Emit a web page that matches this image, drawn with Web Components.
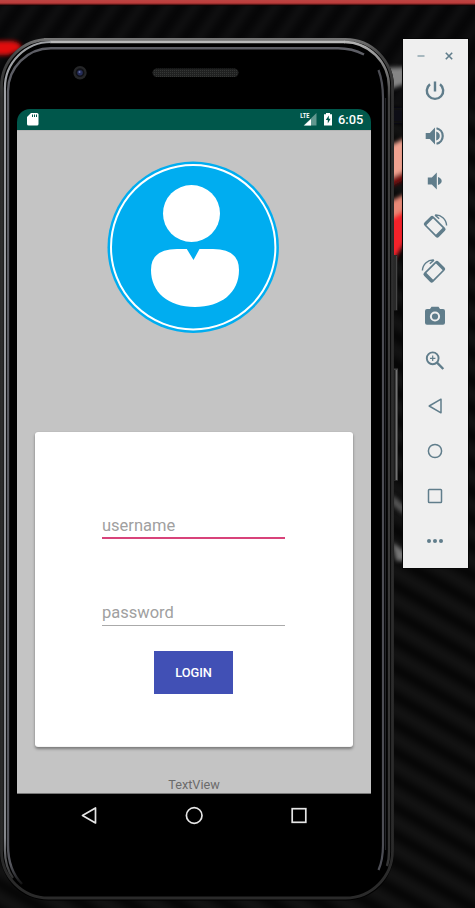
<!DOCTYPE html>
<html lang="en"><head><meta charset="utf-8"><title>Android Emulator</title>
<style>
html,body{margin:0;padding:0;background:#080808;overflow:hidden}
body{font-family:Roboto,"Liberation Sans",sans-serif}
</style></head><body>
<desktop-scene>
  <android-phone>
    <status-bar slot="status">6:05</status-bar>
    <login-screen slot="app">
      <user-avatar></user-avatar>
      <login-card>
        <text-field active>username</text-field>
        <text-field>password</text-field>
        <flat-button>LOGIN</flat-button>
      </login-card>
      <span slot="footer">TextView</span>
    </login-screen>
    <nav-bar slot="nav"></nav-bar>
  </android-phone>
  <emulator-toolbar></emulator-toolbar>
</desktop-scene>
<script>
function define(name, html){
  const t=document.createElement('template'); t.innerHTML=html;
  customElements.define(name, class extends HTMLElement{
    constructor(){super(); this.attachShadow({mode:'open'}).append(t.content.cloneNode(true));}
  });
}

define('desktop-scene', `<style>
:host{display:flex;gap:9px;align-items:flex-start;width:475px;height:908px;box-sizing:border-box;padding-top:38px;position:relative;isolation:isolate;overflow:hidden}
.wall{position:absolute;inset:0;z-index:-1}
</style>
<svg class="wall" width="475" height="908" viewBox="0 0 475 908">
<defs>
<pattern id="weave" width="24" height="24" patternUnits="userSpaceOnUse" patternTransform="rotate(30)"><rect width="24" height="24" fill="#060606"/><rect y="3" width="24" height="13" fill="#121212"/></pattern>
<pattern id="weave2" width="22" height="30" patternUnits="userSpaceOnUse" patternTransform="rotate(35)"><rect width="22" height="30" fill="#060607"/><rect x="4" width="10" height="30" fill="#0f0f10"/></pattern>
<linearGradient id="red" x2="0" y2="1"><stop offset="0" stop-color="#bd4543"/><stop offset=".55" stop-color="#bd3c3b"/><stop offset="1" stop-color="#170000"/></linearGradient>
<filter id="b" x="-50%" y="-50%" width="200%" height="200%"><feGaussianBlur stdDeviation="2"/></filter>
<filter id="b2" color-interpolation-filters="sRGB"><feGaussianBlur stdDeviation="3"/></filter></defs>
<g filter="url(#b2)"><rect x="-15" y="-15" width="505" height="938" fill="url(#weave)"/><rect x="-15" y="-15" width="505" height="120" fill="url(#weave2)"/></g>
<rect width="475" height="5.5" fill="url(#red)"/>
<g filter="url(#b)"><path d="M-5 41H12Q24 43 20 50L8 55H-5z" fill="#e00c0c"/>
<path d="M385 68 L405 67 V84 L385 91z" fill="#858585"/>
<path d="M385 108h20v15h-20z" fill="#0c0f18"/>
<path d="M385 148 L405 138 V172 L385 182z" fill="#f0a290"/>
<path d="M385 181 L405 171 V180 L385 189z" fill="#7c0c0c"/>
<path d="M385 206 L405 196 V242 L385 275z" fill="#f4202b"/>
<path d="M385 204 L405 194 V210 L385 222z" fill="#e88876"/>
<path d="M392 494 L405 506 V516 L392 505z" fill="#555"/>
<path d="M392 542 L405 552 V561 H396z" fill="#777"/></g>
</svg><slot></slot>`);

define('android-phone', `<style>
:host{display:block;flex:none;width:394px;height:862px;box-sizing:border-box;padding:71px 23px 0 17px;position:relative}
.body{position:absolute;left:0;top:0;z-index:0}
.screen{position:relative;display:flex;flex-direction:column}
</style>
<svg class="body" width="403" height="864" viewBox="0 38 403 864">
<defs>
<linearGradient id="o" gradientUnits="userSpaceOnUse" x1="0" y1="38" x2="0" y2="899"><stop offset="0" stop-color="#777"/><stop offset=".02" stop-color="#444"/><stop offset=".07" stop-color="#303030"/><stop offset="1" stop-color="#2a2a2a"/></linearGradient>
<linearGradient id="hl" gradientUnits="userSpaceOnUse" x1="0" y1="38" x2="0" y2="899"><stop offset="0" stop-color="#bbb"/><stop offset=".03" stop-color="#858585"/><stop offset=".07" stop-color="#404040"/><stop offset="1" stop-color="#343434"/></linearGradient>
<linearGradient id="il" gradientUnits="userSpaceOnUse" x1="0" y1="38" x2="0" y2="899"><stop offset="0" stop-color="#5d5e65"/><stop offset=".96" stop-color="#55565d"/><stop offset=".983" stop-color="#111"/></linearGradient>
<linearGradient id="ll" gradientUnits="userSpaceOnUse" x1="0" y1="38" x2="0" y2="880"><stop offset="0" stop-color="#a0a2a6"/><stop offset=".95" stop-color="#85878c"/><stop offset="1" stop-color="#2a2a2a"/></linearGradient>
<pattern id="dots" width="2" height="2" patternUnits="userSpaceOnUse"><rect width="2" height="2" fill="#202121"/><rect width="1" height="1" fill="#343635"/></pattern>
</defs>
<path d="M393 255h4.500v55.500h-4.500z" fill="#292929"/><path d="M396.500 256v54" stroke="#464646"/>
<path d="M393 368.500h5v112h-5z" fill="#424242"/><path d="M394.500 370v110" stroke="#1d1d1d"/><path d="M396.500 370v110" stroke="#717171"/>
<rect x="0" y="38.500" width="394" height="862" rx="48" fill="#000"/>
<rect x="1.500" y="39.500" width="391" height="858.500" rx="47" fill="none" stroke="url(#o)" stroke-width="2.800"/>
<path d="M44 38.500H206" stroke="#777"/>
<path d="M344 42A45 45 0 0 1 389 87V852Q389 860 387 866" fill="none" stroke="url(#hl)" stroke-width="2.400"/>
<path d="M50 42H345" stroke="#b9b9b9" stroke-width="2.300"/>
<path d="M13 878Q5 867 4.900 850V88A46 46 0 0 1 50.900 42" fill="none" stroke="url(#ll)" stroke-width="2.200"/>
<path d="M22 884Q8 870 8 845V91.300A43 43 0 0 1 51 48.300H338Q352 48.300 364 54.500" fill="none" stroke="url(#il)" stroke-width="2.400"/>
<path d="M378.500 70Q383 82 383 98V845Q383 860 378.500 870" fill="none" stroke="#4c4d54" stroke-width="2.200"/>
<path d="M385.500 98V850" stroke="#222326" stroke-width="1.200"/>
<circle cx="80" cy="72.700" r="6.700" fill="#252628"/><circle cx="80" cy="72.700" r="4.400" fill="#101116"/><circle cx="80" cy="72.700" r="2.800" fill="#252c58"/><circle cx="79.500" cy="72" r="1" fill="#6670a0"/>
<rect x="152.500" y="68.500" width="86" height="8.500" rx="4.200" fill="url(#dots)"/>
</svg>
<div class="screen"><slot name="status"></slot><slot name="app"></slot><slot name="nav"></slot></div>`);

define('status-bar', `<style>
:host{display:flex;align-items:center;height:21px;box-sizing:border-box;padding:0 7px 0 10px;background:#00574b;border-radius:13px 13px 0 0;color:#fff;font-size:12.800px;font-weight:500;line-height:22px}
.sp{flex:1}.time{width:26px;white-space:nowrap;padding-top:1px}
svg{display:block;flex:none}
</style>
<svg width="12" height="21" viewBox="27 109 12 21"><path d="M31 113h6q1.500 0 1.500 1.500v9.500q0 1.500-1.500 1.500h-8.500q-1.500 0-1.500-1.500v-7z" fill="#fff"/><path d="M32.500 114.500v2.500M34.500 114.500v2.500M36.500 114.500v2.500" stroke="#00574b"/></svg>
<span class="sp"></span>
<svg width="38" height="21" viewBox="300 109 38 21"><path d="M316.500 113v12.500h-13z" fill="#fff" fill-opacity=".38"/><path d="M311 119v6.500h-7z" fill="#fff"/><rect x="299.500" y="112" width="9.800" height="7.600" fill="#00574b"/>
<text x="300.300" y="118.300" font-size="7.500" font-weight="700" fill="#fff" textLength="9" lengthAdjust="spacingAndGlyphs">LTE</text>
<path d="M326 113h4v1.300h2V125.500h-8V114.300h2z" fill="#fff"/><path d="M328.800 115.500l-3 4.600h2v3.300l2.800-4.600h-1.800z" fill="#00574b"/></svg>
<span class="time"><slot></slot></span>`);

define('login-screen', `<style>
:host{display:flex;flex-direction:column;align-items:center;height:664px;box-sizing:border-box;padding-top:30px;background:#c4c4c4;border-top:1px solid #b5b5b5;border-bottom:1px solid #777}
.foot{font-size:12.700px;line-height:16px;color:#6b6b6b;margin-top:30px}
</style><slot></slot><div class="foot"><slot name="footer"></slot></div>`);

define('user-avatar', `<style>:host{display:block;height:172px;width:172px;margin-right:2px}svg{display:block}</style>
<svg width="172" height="172" viewBox="107 161 172 172"><circle cx="193.200" cy="247.200" r="85.700" fill="#00adf0"/><circle cx="193.200" cy="247.200" r="82.200" fill="none" stroke="#fff" stroke-width="2"/>
<circle cx="191.500" cy="213.500" r="28.500" fill="#fff"/>
<path d="M186.800 249L193.500 260 199.500 249H213Q239 249 239 270C239 293 221 307 195 307C168 307 151 292 151 270Q151 249 177 249z" fill="#fff"/></svg>`);

define('login-card', `<style>
:host{display:flex;flex-direction:column;align-items:center;width:318px;height:316px;box-sizing:border-box;padding:81px 0 0;margin-top:99px;margin-bottom:1px;background:#fff;border-radius:3px;box-shadow:0 1px 0 #f4f4f4,0 2.500px 3px rgba(0,0,0,.38),0 0 1px rgba(0,0,0,.15)}
</style><slot></slot>`);

define('text-field', `<style>
:host{display:block;width:183px;height:26px;box-sizing:border-box;font-size:16.500px;line-height:25px;color:#a0a0a0;margin:0 1px 61px 0;background:linear-gradient(#aaa,#aaa) 0 25px/100% 1px no-repeat}
:host([active]){background:linear-gradient(#d8437a,#d8437a) 0 24px/100% 2px no-repeat}
</style><slot></slot>`);

define('flat-button', `<style>
:host{display:flex;align-items:center;justify-content:center;width:79px;height:43px;background:#4150b5;color:#fff;font-size:12.800px;font-weight:500;line-height:16px;margin:-36px 1px 0 0;box-sizing:border-box;padding-top:1px}
</style><slot></slot>`);

define('nav-bar', `<style>:host{display:flex;height:43px;padding:0 19.500px;background:#000}svg{flex:1;display:block;height:43px}</style>
<svg viewBox="-12 -21.500 24 43"><path d="M6 -7.500V7.500L-7 0z" fill="none" stroke="#e5e5e5" stroke-width="1.700" stroke-linejoin="round"/></svg>
<svg viewBox="-12 -21.500 24 43"><circle cx="-.3" r="7.800" fill="none" stroke="#e5e5e5" stroke-width="1.700"/></svg>
<svg viewBox="-12 -21.500 24 43"><rect x="-7.300" y="-6.800" width="13.600" height="13.600" fill="none" stroke="#e5e5e5" stroke-width="1.700"/></svg>`);

const icons={
minimize:'<path d="M8.500 12h7" stroke="#9fb1b9" stroke-width="1.800"/>',
close:'<path d="M8.800 8.800l6.400 6.400M15.200 8.800l-6.400 6.400" stroke="currentColor" stroke-width="1.600"/>',
power:'<path d="M7 5.200a8.200 8.200 0 1 0 10 0M12 2.600v10" fill="none" stroke="currentColor" stroke-width="2.400"/>',
volup:'<path d="M2.700 9h4.100l5.200-5.500v17L6.800 15H2.700zM13.200 7.500q3.600 1.300 3.600 4.500t-3.600 4.500z" fill="currentColor"/><path d="M13.500 4.200a8 8 0 0 1 0 15.600" fill="none" stroke="currentColor" stroke-width="2.200"/>',
voldown:'<path d="M4.800 8.500h4l5-5v17l-5-5h-4zM15 8q3.700 1.400 3.700 4T15 16z" fill="currentColor"/>',
rotl:'<g transform="translate(11.700 12.700) rotate(45)"><rect x="-9.300" y="-5.600" width="18.600" height="11.200" rx="1.300" fill="none" stroke="currentColor" stroke-width="1.700"/><path d="M-9.300 -5.600h2.300V5.600h-2.300zM6.500 -5.600H9.300V5.600H6.500z" fill="currentColor"/></g><path d="M12 1.100C18 .6 23.300 5 23.600 11.500M12 1.100l4.200 3.600" fill="none" stroke="currentColor" stroke-width="1.400"/>',
camera:'<path d="M8.500 2.800h7L17 5h3q2 0 2 2v11.700q0 2-2 2H4q-2 0-2-2V7q0-2 2-2h3z" fill="currentColor"/><circle cx="12" cy="12.500" r="4.100" fill="none" stroke="#efefef" stroke-width="2"/>',
zoom:'<circle cx="9.700" cy="9.300" r="5.900" fill="none" stroke="currentColor" stroke-width="1.900"/><path d="M14 13.700l6.300 6.300" stroke="currentColor" stroke-width="2.400"/><path d="M7 9.300h5.400M9.700 6.600v5.400" stroke="currentColor" stroke-width="1.200"/>',
back:'<path d="M18 5.200v13.600L6.200 12z" fill="none" stroke="currentColor" stroke-width="1.500" stroke-linejoin="round"/>',
home:'<circle cx="12" cy="12" r="6.600" fill="none" stroke="currentColor" stroke-width="1.500"/>',
overview:'<rect x="5.500" y="5.500" width="13" height="13" rx=".8" fill="none" stroke="currentColor" stroke-width="1.500"/>',
more:'<circle cx="6" cy="12" r="2" fill="currentColor"/><circle cx="12" cy="12" r="2" fill="currentColor"/><circle cx="18" cy="12" r="2" fill="currentColor"/>'};
icons.rotr='<g transform="matrix(-1 0 0 1 23 0)">'+icons.rotl+'</g>';
customElements.define('tool-icon', class extends HTMLElement{
  constructor(){super();this.attachShadow({mode:'open'});}
  connectedCallback(){this.shadowRoot.innerHTML='<style>:host{display:flex;align-items:center;justify-content:center}svg{display:block;overflow:visible}</style><svg width="24" height="24" viewBox="0 0 24 24">'+icons[this.getAttribute('name')]+'</svg>';}
});

define('emulator-toolbar', `<style>
:host{display:flex;flex-direction:column;flex:none;width:65px;height:529px;box-sizing:border-box;padding-right:1px;margin-top:1px;background:#efefef;color:#607d8b;box-shadow:0 0 0 1px #050505;position:relative}
header{display:flex;justify-content:center;gap:4px;height:29.500px;padding-top:5px;box-sizing:border-box;align-items:flex-start}
tool-icon{height:45px}header tool-icon{height:24px}
</style><header><tool-icon name="minimize"></tool-icon><tool-icon name="close"></tool-icon></header>
${['power','volup','voldown','rotl','rotr','camera','zoom','back','home','overview','more'].map(n=>'<tool-icon name="'+n+'"></tool-icon>').join('')}`);
</script>
</body></html>
